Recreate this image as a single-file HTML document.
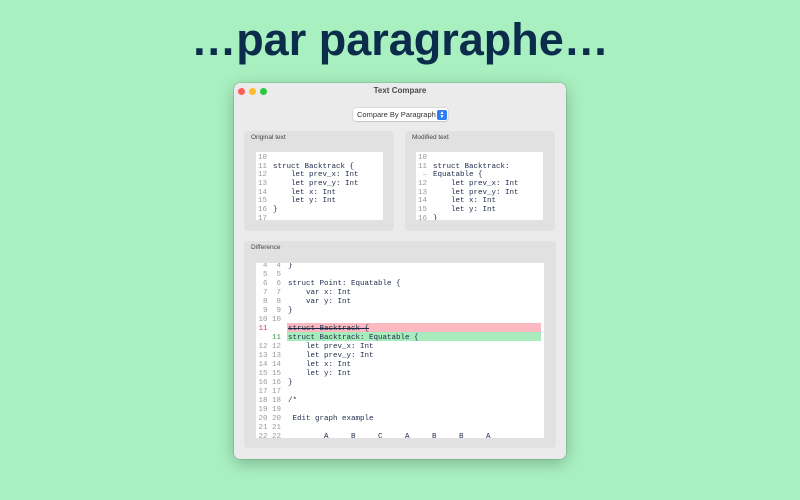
<!DOCTYPE html>
<html><head><meta charset="utf-8"><style>
*{margin:0;padding:0;box-sizing:border-box}
body{width:800px;height:500px;background:#a8f0c0;position:relative;overflow:hidden;font-family:"Liberation Sans",sans-serif}
h1{position:absolute;top:14px;left:0;width:800px;text-align:center;font-size:45px;font-weight:bold;color:#0c2c4c}
.win{position:absolute;left:234px;top:83px;width:332px;height:376px;background:#ecebeb;border-radius:6px;box-shadow:0 4px 16px rgba(0,0,0,.25),0 0 0 .5px rgba(0,0,0,.2)}
.dot{position:absolute;top:5px;width:7px;height:7px;border-radius:50%}
.title{position:absolute;top:3px;width:100%;text-align:center;font-size:8px;font-weight:bold;color:#4a4a4a}
.pop{position:absolute;left:119px;top:25px;width:95px;height:13px;background:#fff;border-radius:3px;box-shadow:0 0 0 .5px rgba(0,0,0,.15),0 1px 1px rgba(0,0,0,.1);font-size:7.5px;color:#333;padding:2px 0 0 4px}
.pop b{position:absolute;right:1px;top:1.5px;width:10px;height:10px;background:#2d7cf6;border-radius:2px;color:#fff;font-size:5px;line-height:4px;text-align:center;padding-top:1px}
.panel{position:absolute;background:#e2e1e1;border-radius:4px}
.lbl{position:absolute;left:7px;top:3px;font-size:6.5px;color:#444}
.code{position:absolute;background:#fff;overflow:hidden;font-family:"Liberation Mono",monospace;font-size:7.5px;color:#1e2a4a}
.code div.r{position:absolute;left:0;right:0;white-space:pre;line-height:9px}
.n{position:absolute;left:0;text-align:right;color:#999}
.t{position:absolute}
.d{position:absolute;left:31px;right:3px;height:9px}
</style></head><body>
<h1>…par paragraphe…</h1>
<div class="win">
<div class="dot" style="left:4px;background:#fe5f57"></div>
<div class="dot" style="left:15px;background:#febc2e"></div>
<div class="dot" style="left:26px;background:#28c840"></div>
<div class="title">Text Compare</div>
<div class="pop">Compare By Paragraph<b>▲<br>▼</b></div>
<div class="panel" style="left:10px;top:48px;width:150px;height:100px"><div class="lbl">Original text</div>
<div class="code" id="o" style="left:12px;top:21px;width:127px;height:68px"></div></div>
<div class="panel" style="left:171px;top:48px;width:150px;height:100px"><div class="lbl">Modified text</div>
<div class="code" id="m" style="left:11px;top:21px;width:127px;height:68px"></div></div>
<div class="panel" style="left:10px;top:158px;width:312px;height:207px"><div class="lbl">Difference</div>
<div class="code" id="df" style="left:12px;top:22px;width:288px;height:175px">
<div class="d" style="top:59.5px;background:#fbb9c2"></div>
<div class="d" style="top:68.5px;background:#a8ecbd"></div>
</div></div>
</div>
<script>
function fill(id,rows,lh,top,nw,tx){var e=document.getElementById(id),h='';rows.forEach(function(r,i){h+='<div class="r" style="top:'+(top+i*lh)+'px"><span class="n" style="width:'+nw+'px;'+(r[2]||'')+'">'+r[0]+'</span><span class="t" style="left:'+tx+'px">'+r[1]+'</span></div>'});e.insertAdjacentHTML('beforeend',h)}
fill('o',[['10',''],['11','struct Backtrack {'],['12','    let prev_x: Int'],['13','    let prev_y: Int'],['14','    let x: Int'],['15','    let y: Int'],['16','}'],['17','']],8.7,1.8,11,17);
fill('m',[['10',''],['11','struct Backtrack:'],['–','Equatable {'],['12','    let prev_x: Int'],['13','    let prev_y: Int'],['14','    let x: Int'],['15','    let y: Int'],['16','}']],8.7,1.8,11,17);
var R='color:#d04050',G='color:#3a9a50';
fill('df',[[' 4  4','}'],[' 5  5',''],[' 6  6','struct Point: Equatable {'],[' 7  7','    var x: Int'],[' 8  8','    var y: Int'],[' 9  9','}'],['10 10',''],['11   ','<s>struct Backtrack {</s>',R],['   11','struct Backtrack: Equatable {',G],['12 12','    let prev_x: Int'],['13 13','    let prev_y: Int'],['14 14','    let x: Int'],['15 15','    let y: Int'],['16 16','}'],['17 17',''],['18 18','/*'],['19 19',''],['20 20',' Edit graph example'],['21 21',''],['22 22','        A     B     C     A     B     B     A']],9,-1.5,25,32);
</script>
</body></html>
